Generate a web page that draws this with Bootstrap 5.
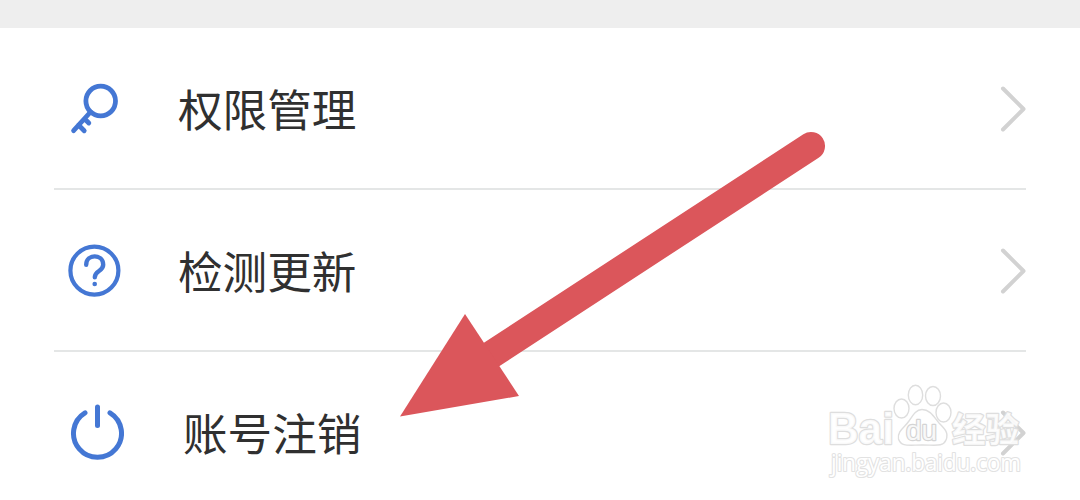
<!DOCTYPE html>
<html lang="zh-CN">
<head>
  <meta charset="UTF-8">
  <meta name="viewport" content="width=device-width, initial-scale=1">
  <title>设置</title>
  <link href="https://cdn.jsdelivr.net/npm/bootstrap@5.3.2/dist/css/bootstrap.min.css" rel="stylesheet">
  <style>
    body { font-family: "Noto Sans CJK SC", sans-serif; color: #303030; height: 500px; }
    .top-strip { height: 28px; background: #eee; }
    .settings { padding: 0 54px; }
    .setting-item { height: 162px; border-bottom: 2px solid #e4e6e6; }
    .setting-item:last-child { height: 148px; border-bottom: 0; }
    .item-icon { width: 60px; height: 60px; margin-left: 10px; fill: none; stroke: #4477d4; stroke-width: 4.8; stroke-linecap: round; stroke-linejoin: round; }
    .item-label { font-size: 44.6px; line-height: 60px; margin-left: 54px; padding-bottom: 3px; }
    .shifted { margin-left: 59px; }
    .item-arrow { width: 30px; height: 60px; margin-right: -2px; fill: none; stroke: #d2d2d2; stroke-width: 4; stroke-linecap: round; stroke-linejoin: round; }
    .row-inner { height: 60px; margin-top: 51px; }
    .overlay { pointer-events: none; }
    .overlay text { paint-order: stroke; }
  </style>
</head>
<body class="bg-white position-relative overflow-hidden">
  <div class="top-strip"></div>

  <div class="settings">
    <div class="setting-item d-flex">
      <div class="row-inner d-flex align-items-center w-100">
        <!-- key -->
        <svg class="item-icon" viewBox="64 79 60 60">
          <circle cx="100.7" cy="101" r="14.8"/>
          <path d="M90.500 112L73.6 130.600M78.500 125L84.2 130.7M84.500 118.700L88.8 123"/>
        </svg>
        <span class="item-label">权限管理</span>
        <svg class="item-arrow ms-auto" viewBox="998 79 30 60"><path d="M1003 88.5L1023.5 109L1003 129.5"/></svg>
      </div>
    </div>

    <div class="setting-item d-flex">
      <div class="row-inner d-flex align-items-center w-100">
        <!-- help -->
        <svg class="item-icon" viewBox="64 241 60 60">
          <circle cx="94.4" cy="270.6" r="24" stroke-width="4.2"/>
          <path d="M86.2 264.8C86.2 253.5 103.2 253.5 103.2 264.8C103.2 271.5 94.8 270.5 94.8 277.3" stroke-width="4.4"/>
          <circle cx="94.7" cy="284" r="2.3" fill="#4477d4" stroke="none"/>
        </svg>
        <span class="item-label">检测更新</span>
        <svg class="item-arrow ms-auto" viewBox="998 79 30 60"><path d="M1003 88.5L1023.5 109L1003 129.5"/></svg>
      </div>
    </div>

    <div class="setting-item d-flex">
      <div class="row-inner d-flex align-items-center w-100">
        <!-- power -->
        <svg class="item-icon" viewBox="64 403 60 60">
          <path d="M85 412.8A24 24 0 1 0 110 412.8" stroke-width="5"/>
          <path d="M97.5 407V425.5" stroke-width="5"/>
        </svg>
        <span class="item-label shifted">账号注销</span>
        <svg class="item-arrow ms-auto" viewBox="998 79 30 60"><path d="M1003 88.5L1023.5 109L1003 129.5"/></svg>
      </div>
    </div>
  </div>

  <!-- red pointer and watermark lie over the list -->
  <svg class="overlay position-absolute top-0 start-0" width="1080" height="500" viewBox="0 0 1080 500">
    <path d="M811 146L480 362" stroke="#db565b" stroke-width="28" stroke-linecap="round"/>
    <path d="M400 416.5L465 314L519 396Z" fill="#db565b"/>

    <g fill="#fff" fill-opacity=".85" stroke="#dedede" stroke-width="1.4" stroke-linejoin="round">
      <text x="828" y="444" font-family="Liberation Sans, sans-serif" font-weight="bold" font-size="44" stroke-width="2.4" textLength="66" lengthAdjust="spacingAndGlyphs">Bai</text>
      <ellipse cx="901.5" cy="408.5" rx="7.5" ry="9.5"/>
      <ellipse cx="915.5" cy="395" rx="7.2" ry="9.7"/>
      <ellipse cx="933" cy="396" rx="7.5" ry="9.5"/>
      <ellipse cx="943.5" cy="412.5" rx="7.5" ry="9.5"/>
      <path d="M922 409.5C930 409.5 934 417 939 423C945 429 949 433 946 440C943 447 936 445 922 445C908 445 901 447 898.5 439C897 431 905 427 909 421C913 415 916 409.5 922 409.5Z"/>
      <text x="906" y="440" font-family="Liberation Sans, sans-serif" font-size="28" stroke-width="2.4" stroke="#d4d4d4" textLength="31" lengthAdjust="spacingAndGlyphs">du</text>
      <text x="952" y="442" font-family="Noto Sans CJK SC, sans-serif" font-weight="bold" font-size="34" stroke-width="2.4" textLength="67" lengthAdjust="spacingAndGlyphs">经验</text>
      <text x="831" y="471" font-family="Open Sans, sans-serif" font-size="23" stroke-width="2.2" stroke="#e2e2e2" fill-opacity="1" textLength="190" lengthAdjust="spacingAndGlyphs">jingyan.baidu.com</text>
    </g>
  </svg>

  <script src="https://cdn.jsdelivr.net/npm/bootstrap@5.3.2/dist/js/bootstrap.bundle.min.js"></script>
</body>
</html>
